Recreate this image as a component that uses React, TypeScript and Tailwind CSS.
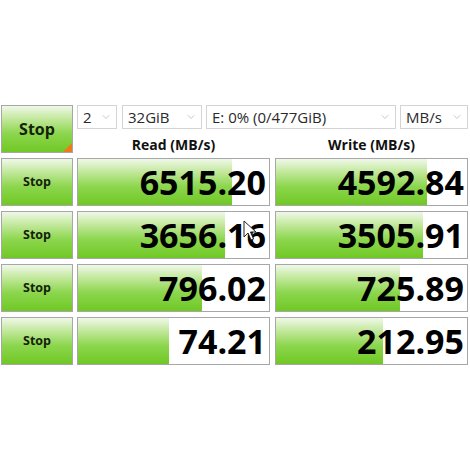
import { ChevronDown } from "lucide-react";

type Row = { read: string; readPct: number; write: string; writePct: number };

const rows: Row[] = [
  { read: "6515.20", readPct: 80.6, write: "4592.84", writePct: 79 },
  { read: "3656.16", readPct: 77, write: "3505.91", writePct: 77 },
  { read: "796.02", readPct: 65, write: "725.89", writePct: 65 },
  { read: "74.21", readPct: 47.6, write: "212.95", writePct: 56 },
];

const green =
  "bg-[linear-gradient(to_bottom,#f0f8ea_0%,#c2e89c_28%,#8cd64e_60%,#70c824_100%)]";

function StopButton({ big }: { big?: boolean }) {
  return (
    <div
      className={`relative flex h-full w-[72px] items-center justify-center border border-[#a7a7a7] ${green}`}
    >
      <span
        className={`font-bold text-[#14220a] ${big ? "text-[16px]" : "text-[12.5px]"}`}
      >
        Stop
      </span>
      {big && (
        <div className="absolute bottom-0 right-0 h-0 w-0 border-b-[9px] border-l-[9px] border-b-[#f07a1a] border-l-transparent" />
      )}
    </div>
  );
}

function Select({ label, w }: { label: string; w: string }) {
  return (
    <div
      className={`flex h-[24px] items-center justify-between border border-[#d4d4d4] bg-white pl-[5px] pr-[4px] ${w}`}
    >
      <span className="text-[15px] leading-none text-[#2a2a2a]">{label}</span>
      <ChevronDown size={12} strokeWidth={1.5} className="text-[#b5b5b5]" />
    </div>
  );
}

function Meter({ value, pct }: { value: string; pct: number }) {
  return (
    <div className="relative flex h-full w-[193px] items-center justify-end overflow-hidden border border-[#a7a7a7] bg-white pr-[3px]">
      <div
        className={`absolute bottom-0 left-0 top-0 ${green}`}
        style={{ width: `${pct}%` }}
      />
      <span className="relative text-[34px] font-bold leading-none text-black">
        {value}
      </span>
    </div>
  );
}

function Cursor() {
  return (
    <svg
      className="absolute left-[243px] top-[220px]"
      width="14"
      height="22"
      viewBox="0 0 14 22"
    >
      <path
        d="M1 1 L1 17 L5 13 L8 20 L10.5 19 L7.5 12 L13 12 Z"
        fill="white"
        stroke="#222"
        strokeWidth="1"
        strokeLinejoin="round"
      />
    </svg>
  );
}

export default function App() {
  return (
    <div className="relative h-[470px] w-[470px] bg-white font-['Open_Sans','Liberation_Sans',sans-serif]">
      <div className="flex flex-col gap-[5px] pl-[1px] pt-[105px]">
        {/* header: big stop button, selects, column titles */}
        <div className="flex h-[48px] gap-[4px]">
          <StopButton big />
          <div className="flex flex-col">
            <div className="flex gap-[4px]">
              <Select label="2" w="w-[40px] mr-[1px]" />
              <Select label="32GiB" w="w-[80px]" />
              <Select label="E: 0% (0/477GiB)" w="w-[190px]" />
              <Select label="MB/s" w="w-[68px]" />
            </div>
            <div className="flex flex-1 items-center gap-[5px] pt-[5px]">
              <div className="w-[193px] text-center text-[14px] font-bold text-[#111]">
                Read (MB/s)
              </div>
              <div className="w-[193px] text-center text-[14px] font-bold text-[#111]">
                Write (MB/s)
              </div>
            </div>
          </div>
        </div>

        {rows.map((r, i) => (
          <div key={i} className="flex h-[48px] gap-[4px]">
            <StopButton />
            <div className="flex gap-[5px]">
              <Meter value={r.read} pct={r.readPct} />
              <Meter value={r.write} pct={r.writePct} />
            </div>
          </div>
        ))}
      </div>
      <Cursor />
    </div>
  );
}
